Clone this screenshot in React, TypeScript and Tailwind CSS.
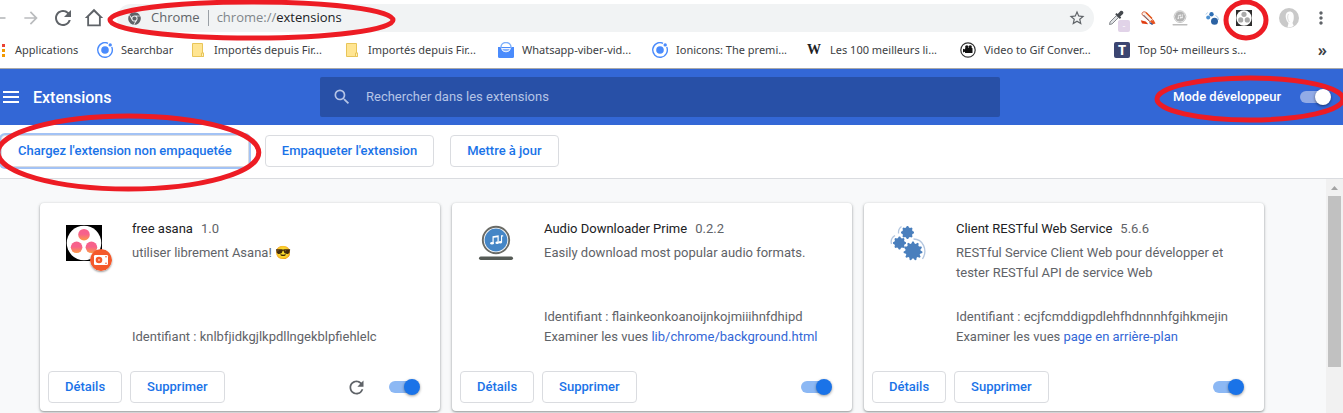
import type { ReactNode } from 'react';
import { FaChrome } from 'react-icons/fa';
import { MdArrowForward, MdMoreVert, MdRefresh, MdSearch, MdStarBorder } from 'react-icons/md';

function Ring({ className }: { className: string }) {
  return (
    <span className={`pointer-events-none absolute z-10 ${className}`} aria-hidden="true">
      <svg className="size-full overflow-visible">
        <ellipse cx="50%" cy="50%" rx="50%" ry="50%" fill="none" stroke="#ed1c24" strokeWidth="5" />
      </svg>
    </span>
  );
}

function HomeIcon() {
  return (
    <svg viewBox="0 0 24 24" className="size-[22px]" fill="currentColor" aria-hidden="true">
      <path d="M12 5.2l5.4 5.2V19H6.600v-8.600zM12 2L2 11.900h2.600V21h14.800v-9.100H22z" fillRule="evenodd" />
    </svg>
  );
}

function DropperIcon() {
  return (
    <svg viewBox="0 0 16 16" className="size-4" aria-hidden="true">
      <path d="M1.500 14.500l.6-2.600 6.300-6.300 2 2-6.300 6.300z" fill="#dfe2e4" stroke="#777b80" strokeWidth=".9" />
      <path d="M7.200 4.200l1.400-1.300 1.100 1 2.500-2.700c1.700-1.600 4.300 1 2.700 2.700l-2.700 2.600 1 1.100-1.300 1.400z" fill="#45494e" />
    </svg>
  );
}

function CleanerIcon() {
  return (
    <svg viewBox="0 0 16 16" className="size-4" aria-hidden="true">
      <path d="M2 4.500C1.500 2 4.500 1 6 2.500l6.500 7-2.500 2.300z" fill="#fbeee6" stroke="#d2502a" strokeWidth=".9" />
      <path d="M3.500 5l5.500 5.500" stroke="#3f4a6b" strokeWidth=".9" />
      <path d="M6 2.500l6 6" stroke="#e2571d" strokeWidth="1.400" />
      <path d="M.8 10.200l5 1.400 2.400 2.700-6.200-.8z" fill="#e03d12" />
      <path d="M10.500 11.500l3-1.700 2 3.700-3.500 1z" fill="#e8531f" />
      <path d="M9.500 12.500l3 2" stroke="#2d4d8f" strokeWidth="1.300" />
    </svg>
  );
}

function AudioIcon({ muted = false }: { muted?: boolean }) {
  const rim = muted ? '#bdbdbd' : '#6a6b66';
  return (
    <svg viewBox="0 0 36 36" className={muted ? 'size-4' : 'size-9'} aria-hidden="true">
      <circle cx="18" cy="15" r="13.200" fill="#fff" stroke={rim} strokeWidth="1.900" />
      <circle cx="18" cy="15" r="11.400" fill={muted ? '#b4b4b4' : '#4586c6'} />
      <g fill="#fff">
        <path d="M14.500 11.200l6.200-1v7.600h-1.200v-5.600l-3.800.6v5.700h-1.200z" />
        <ellipse cx="14" cy="18.300" rx="1.800" ry="1.300" />
        <ellipse cx="19.200" cy="17.700" rx="1.800" ry="1.300" />
        <path d="M23 10.200h2.200v1.200h-1.100v6H23z" />
        <ellipse cx="22.300" cy="17.200" rx="1.600" ry="1.200" />
      </g>
      <rect x="1" y="31.500" width="34" height="3.500" rx="1.700" fill={muted ? '#bdbdbd' : '#555a55'} />
    </svg>
  );
}

function gearPoints(cx: number, cy: number, r: number, teeth: number) {
  const points: string[] = [];
  for (let i = 0; i < teeth * 4; i++) {
    const radius = i % 4 < 2 ? r : r * 0.8;
    const angle = ((i - 0.5) / (teeth * 4)) * Math.PI * 2 - Math.PI / 2;
    points.push(`${(cx + radius * Math.cos(angle)).toFixed(2)},${(cy + radius * Math.sin(angle)).toFixed(2)}`);
  }
  return points.join(' ');
}

function GearsIcon() {
  return (
    <svg viewBox="0 0 36 36" className="size-9" aria-hidden="true">
      <g fill="#4a7fbd">
        <polygon points={gearPoints(17.500, 7.500, 6.500, 8)} />
        <polygon points={gearPoints(9.500, 18, 6.500, 8)} />
        <polygon points={gearPoints(23, 26, 9.500, 11)} />
      </g>
      <g fill="none" stroke="#b3c6df" strokeWidth="1.300">
        <path d="M11.500 1.500Q8 4 8.500 8.500" />
        <path d="M5 10.500Q0 13.500 1.500 19" />
        <path d="M23.500 14C33 14 38 25 32.500 34" />
      </g>
    </svg>
  );
}

function SmallGearsIcon() {
  return (
    <svg viewBox="0 0 16 16" className="size-4" aria-hidden="true">
      <circle cx="7.500" cy="4.200" r="2.200" fill="#2f6fb5" />
      <circle cx="4.200" cy="7.500" r="2" fill="#4a8fd0" />
      <circle cx="10.500" cy="11.200" r="3.500" fill="#2c62a3" />
      <path d="M3.500 2.500L2 4.500M11.500 5.500q3 1 3 4.500" stroke="#a9c8e8" fill="none" />
    </svg>
  );
}

function AsanaIcon({ muted = false }: { muted?: boolean }) {
  const dot = muted ? '#a9a9a9' : 'url(#asana-dot)';
  return (
    <svg viewBox="0 0 36 36" className={muted ? 'size-4' : 'size-9'} aria-hidden="true">
      <defs>
        <linearGradient id="asana-dot" x1="0" y1="0" x2="0" y2="1">
          <stop offset="0.450" stopColor="#f7618b" />
          <stop offset="1" stopColor="#fc9a45" />
        </linearGradient>
      </defs>
      <rect width="36" height="36" fill={muted ? '#2e2e2e' : '#000'} />
      <circle cx="18" cy="18" r="17.300" fill="#fff" />
      <circle cx="18" cy="9.700" r="5.800" fill={dot} />
      <circle cx="10.600" cy="22.300" r="5.800" fill={dot} />
      <circle cx="25.400" cy="22.300" r="5.800" fill={dot} />
    </svg>
  );
}

function UnpackedBadge() {
  return (
    <svg viewBox="0 0 22 22" className="absolute -right-2.5 -bottom-2.5 size-[22px] rounded-full shadow-[0_1px_2px_rgba(0,0,0,0.4)]" aria-hidden="true">
      <circle cx="11" cy="11" r="11" fill="#f4592b" />
      <rect x="4" y="6" width="14" height="10" rx="1.200" fill="#fff" />
      <circle cx="9" cy="11" r="3.300" fill="#f4592b" />
      <circle cx="9" cy="11" r="1" fill="#fbb9a3" />
      <circle cx="16" cy="7.800" r=".8" fill="#f4592b" />
      <circle cx="16" cy="14.200" r=".8" fill="#f4592b" />
    </svg>
  );
}

function AvatarIcon() {
  return (
    <svg viewBox="0 0 20 20" className="size-5" aria-hidden="true">
      <circle cx="10" cy="10" r="10" fill="#c9c9c9" />
      <path d="M8 4.500c3.500-2.500 7 0 6.800 4.500 0 3-.6 4.500-1.300 6l1.200 2.800c-2 1.500-4.500 2-6.200 1.400l1-4.200C7 12.500 5.500 7 8 4.500z" fill="#fdfdfd" />
      <path d="M9.500 6c-1.500 2-1 6 .8 8" stroke="#dedede" fill="none" />
    </svg>
  );
}

function IonicIcon() {
  return (
    <svg viewBox="0 0 16 16" className="size-4" aria-hidden="true">
      <path d="M11 1.300a7.300 7.300 0 1 0 3.700 3.700" fill="none" stroke="#4a8bfc" strokeWidth="1.400" />
      <circle cx="8" cy="8" r="3.800" fill="#4a8bfc" />
      <circle cx="13.200" cy="2.900" r="1.700" fill="#4a8bfc" />
    </svg>
  );
}

function FolderIcon() {
  return (
    <svg viewBox="0 0 16 16" className="size-4" aria-hidden="true">
      <path d="M2.500 1.500h10v9.500h1v3.500h-11z" fill="#ffe592" stroke="#e8c559" />
      <path d="M11.500 14.500v-3.500h2v3.500z" fill="#fff0b8" stroke="#e8c559" />
    </svg>
  );
}

function BagIcon() {
  return (
    <svg viewBox="0 0 16 16" className="size-4" aria-hidden="true">
      <path d="M0 5h16v9.500q0 1.500-1.500 1.500h-13Q0 16 0 14.500z" fill="#4a8bfc" />
      <path d="M3 6V5a5 4.500 0 0 1 10 0v1" fill="none" stroke="#7fb0fb" strokeWidth="1.400" />
      <path d="M3.500 6.500a4.600 4.200 0 0 0 9 0z" fill="#8ab4fd" stroke="#fff" strokeWidth=".9" />
    </svg>
  );
}

function FilmIcon() {
  return (
    <svg viewBox="0 0 16 16" className="size-4" aria-hidden="true">
      <circle cx="8" cy="8" r="7.200" fill="#fff" stroke="#333" strokeWidth="1.200" />
      <g fill="#111">
        <circle cx="6.800" cy="5" r="1.700" />
        <circle cx="10.200" cy="5" r="1.700" />
        <rect x="5" y="6" width="7.500" height="5" rx=".6" />
        <path d="M3 6.800l2.500.8v2l-2.500.8z" />
      </g>
    </svg>
  );
}

function Bookmark({ icon, label, width = 'w-[138px]' }: { icon: ReactNode; label: string; width?: string }) {
  return (
    <a href="#" className={`flex shrink-0 items-center gap-2 whitespace-nowrap ${width}`}>
      <span className="flex size-4 shrink-0 items-center justify-center">{icon}</span>
      {label}
    </a>
  );
}

function ActionButton({ children, focused = false }: { children: ReactNode; focused?: boolean }) {
  return (
    <button
      type="button"
      className={`h-8 rounded border border-[#dadce0] bg-white px-4 text-[13px] font-medium whitespace-nowrap text-[#1a73e8] ${focused ? 'ring-2 ring-[#a3c3f5]' : ''}`}
    >
      {children}
    </button>
  );
}

type Extension = {
  name: string;
  version: string;
  description: string;
  id: string;
  view?: string;
  icon: ReactNode;
  unpacked?: boolean;
};

const extensions: Extension[] = [
  {
    name: 'free asana',
    version: '1.0',
    description: 'utiliser librement Asana! 😎',
    id: 'knlbfjidkgjlkpdllngekblpfiehlelc',
    icon: <AsanaIcon />,
    unpacked: true,
  },
  {
    name: 'Audio Downloader Prime',
    version: '0.2.2',
    description: 'Easily download most popular audio formats.',
    id: 'flainkeonkoanoijnkojmiiihnfdhipd',
    view: 'lib/chrome/background.html',
    icon: <AudioIcon />,
  },
  {
    name: 'Client RESTful Web Service',
    version: '5.6.6',
    description: 'RESTful Service Client Web pour développer et tester RESTful API de service Web',
    id: 'ecjfcmddigpdlehfhdnnnhfgihkmejin',
    view: 'page en arrière-plan',
    icon: <GearsIcon />,
  },
];

function ExtensionCard({ item }: { item: Extension }) {
  return (
    <article className="flex min-h-52 flex-col rounded bg-white shadow-[0_1px_2px_rgba(60,64,67,0.4),0_1px_3px_1px_rgba(60,64,67,0.15)]">
      <div className="flex flex-1 gap-[30px] pt-4 pr-5 pl-[26px]">
        <div className="relative mt-1.5 size-9 shrink-0">
          {item.icon}
          {item.unpacked && <UnpackedBadge />}
        </div>
        <div className="flex min-w-0 flex-1 flex-col text-[13px] leading-5 text-[#5f6368]">
          <div className="flex gap-2">
            <h2 className="text-[#202124]">{item.name}</h2>
            <span>{item.version}</span>
          </div>
          <p className="mt-1">{item.description}</p>
          <div className="mt-auto pb-6">
            <p>Identifiant : {item.id}</p>
            {item.view && (
              <p>
                Examiner les vues <a href="#" className="text-[#3367d6]">{item.view}</a>
              </p>
            )}
          </div>
        </div>
      </div>
      <div className="flex items-center gap-2 pr-5 pb-2 pl-2">
        <ActionButton>Détails</ActionButton>
        <ActionButton>Supprimer</ActionButton>
        <div className="ml-auto flex items-center gap-[22px]">
          {item.unpacked && (
            <button type="button" aria-label="Actualiser" className="text-[#5f6368]">
              <MdRefresh size={21} />
            </button>
          )}
          <input
            type="checkbox"
            role="switch"
            defaultChecked
            aria-label={item.name}
            className="relative mr-[3px] h-3 w-7 appearance-none rounded-full bg-[#8cb8f4] before:absolute before:-top-0.5 before:-right-[3px] before:size-4 before:rounded-full before:bg-[#1a73e8] before:shadow-[0_1px_3px_rgba(0,0,0,0.4)] before:content-['']"
          />
        </div>
      </div>
    </article>
  );
}

export default function App() {
  return (
    <div className="flex min-h-screen flex-col overflow-hidden bg-white font-['Roboto',sans-serif]">
      <div className="flex h-9 items-center font-['Open_Sans',sans-serif] text-[#5f6368]">
        <button type="button" aria-label="Retour" className="flex w-1.5 justify-end overflow-hidden text-[#babcbe]">
          <svg viewBox="0 0 6 20" className="h-5 w-1.5" aria-hidden="true">
            <path d="M0 10h5.500" stroke="currentColor" strokeWidth="1.700" />
          </svg>
        </button>
        <button type="button" aria-label="Avancer" className="ml-[15px] text-[#babcbe]">
          <MdArrowForward size={20} />
        </button>
        <button type="button" aria-label="Actualiser la page" className="ml-2.5">
          <MdRefresh size={24} />
        </button>
        <button type="button" aria-label="Accueil" className="ml-2">
          <HomeIcon />
        </button>
        <div className="relative ml-3 flex h-7 flex-1 items-center rounded-full bg-[#f1f3f4] pr-2 pl-[11px] text-[13px]">
          <FaChrome size={13} />
          <span className="ml-2.5">Chrome</span>
          <span className="mx-2 h-4 w-px bg-[#9aa0a6]" />
          <span className="text-[#80868b]">
            chrome://<span className="text-[#202124]">extensions</span>
          </span>
          <button type="button" aria-label="Ajouter aux favoris" className="ml-auto">
            <MdStarBorder size={18} />
          </button>
          <Ring className="-top-0.5 -left-[7px] h-9 w-[283px]" />
        </div>
        <div className="flex w-[249px] shrink-0 items-center pl-3.5">
          <div className="flex items-center gap-4">
            <span className="relative">
              <DropperIcon />
              <span className="absolute top-2.5 left-2.5 flex size-3 items-center justify-center rounded-xs bg-[#e1d3e8] text-[9px] text-white">-</span>
            </span>
            <CleanerIcon />
            <AudioIcon muted />
            <SmallGearsIcon />
            <span className="relative">
              <AsanaIcon muted />
              <Ring className="-top-2 -left-2.5 h-9 w-10" />
            </span>
          </div>
          <span className="ml-[27px]">
            <AvatarIcon />
          </span>
          <button type="button" aria-label="Menu" className="ml-3">
            <MdMoreVert size={20} />
          </button>
        </div>
      </div>

      <nav className="flex h-[33px] items-center gap-4 border-b border-[#a9a9a9] pb-1 font-['Noto_Sans',sans-serif] text-[11px] text-[#3c4043]">
        <a href="#" className="flex w-[81px] shrink-0 items-center gap-2.5 pl-0.5">
          <span className="flex flex-col gap-0.5">
            <span className="size-[3px] bg-[#ea4335]" />
            <span className="size-[3px] bg-[#f29900]" />
            <span className="size-[3px] bg-[#f29900]" />
          </span>
          Applications
        </a>
        <Bookmark icon={<IonicIcon />} label="Searchbar" width="w-[77px]" />
        <Bookmark icon={<FolderIcon />} label="Importés depuis Fir..." />
        <Bookmark icon={<FolderIcon />} label="Importés depuis Fir..." />
        <Bookmark icon={<BagIcon />} label="Whatsapp-viber-vid..." />
        <Bookmark icon={<IonicIcon />} label="Ionicons: The premi..." />
        <Bookmark icon={<span className="font-['Liberation_Serif',serif] text-[14px] leading-4 font-bold text-[#202124]">W</span>} label="Les 100 meilleurs li..." />
        <Bookmark icon={<FilmIcon />} label="Video to Gif Conver..." />
        <Bookmark
          icon={<span className="flex size-4 items-center justify-center rounded-xs bg-[#3b4571] text-[14px] leading-4 font-bold text-white">T</span>}
          label="Top 50+ meilleurs s..."
        />
        <button type="button" aria-label="Autres favoris" className="mr-4 ml-auto text-[16px] leading-4 font-semibold">»</button>
      </nav>

      <header className="grid h-14 grid-cols-[320px_minmax(0,680px)_1fr] items-center bg-[#3367d6] text-white">
        <div className="flex items-center gap-3.5 pl-[3px]">
          <button type="button" aria-label="Menu principal" className="flex w-4 flex-col gap-[3px]">
            <span className="h-0.5 bg-white" />
            <span className="h-0.5 bg-white" />
            <span className="h-0.5 bg-white" />
          </button>
          <h1 className="pt-0.5 text-[16px] font-medium">Extensions</h1>
        </div>
        <label className="flex h-10 items-center gap-3.5 rounded-xs bg-[#2850a7] pl-3 text-[#b5c4e6]">
          <MdSearch size={20} />
          <input
            type="search"
            aria-label="Rechercher dans les extensions"
            placeholder="Rechercher dans les extensions"
            className="min-w-0 flex-1 bg-transparent text-[13px] outline-none placeholder:text-[#b5c4e6]"
          />
        </label>
        <label className="relative ml-auto flex items-center gap-[19px] pr-[15px] text-[13px] font-medium">
          Mode développeur
          <input
            type="checkbox"
            role="switch"
            defaultChecked
            className="relative h-3 w-7 appearance-none rounded-full bg-[#92abe6] before:absolute before:-top-0.5 before:-right-[3px] before:size-4 before:rounded-full before:bg-white before:shadow-[0_1px_3px_rgba(0,0,0,0.5)] before:content-['']"
          />
          <Ring className="-top-[9px] right-0 h-[42px] w-[186px]" />
        </label>
      </header>

      <div className="flex h-[54px] items-center gap-4 border-b border-[#dadce0] pb-0.5 pl-px">
        <div className="relative">
          <ActionButton focused>Chargez l'extension non empaquetée</ActionButton>
          <Ring className="-top-[19px] -right-[10px] -left-[3px] h-[73px]" />
        </div>
        <ActionButton>Empaqueter l'extension</ActionButton>
        <ActionButton>Mettre à jour</ActionButton>
      </div>

      <div className="flex flex-1 bg-[#f8f9fa]">
        <main className="grid flex-1 grid-cols-[repeat(auto-fill,400px)] content-start gap-3 pt-6 pb-0.5 pl-10">
          {extensions.map((item) => (
            <ExtensionCard key={item.id} item={item} />
          ))}
        </main>
        <div className="flex w-[17px] shrink-0 flex-col items-center bg-[#f1f1f1]" aria-hidden="true">
          <svg viewBox="0 0 17 17" className="size-[17px]">
            <path d="M5 11l3.500-4 3.500 4z" fill="#a3a3a3" />
          </svg>
          <div className="h-[171px] w-[13px] bg-[#c1c1c1]" />
        </div>
      </div>
    </div>
  );
}
